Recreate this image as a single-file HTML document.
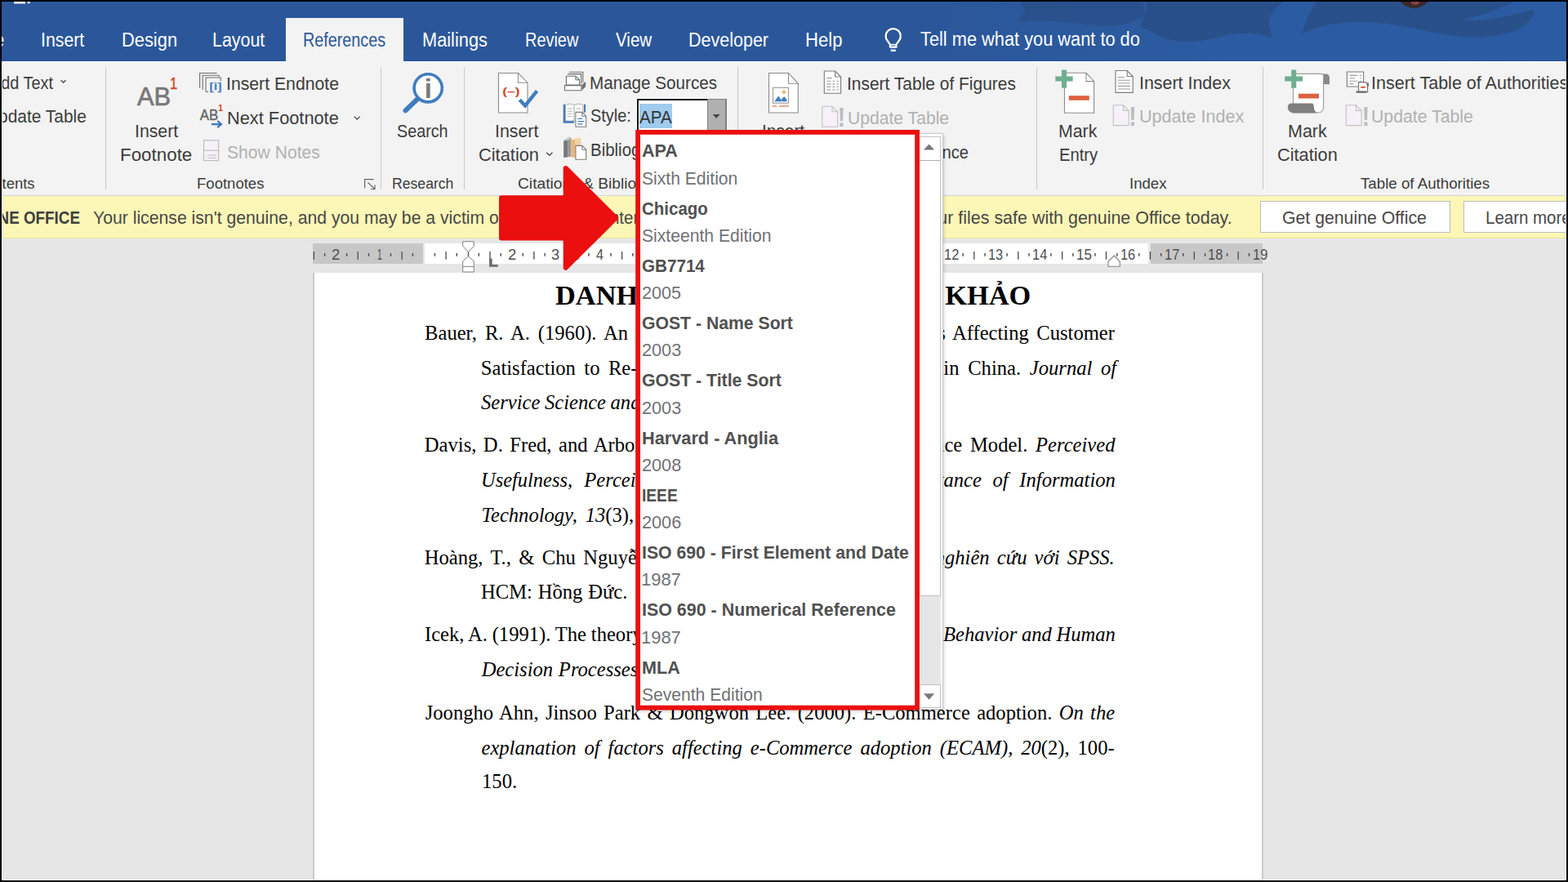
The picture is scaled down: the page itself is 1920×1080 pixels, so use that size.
<!DOCTYPE html>
<html lang="en">
<head>
<meta charset="utf-8">
<title>References - Citation Style</title>
<style>
html,body{margin:0;padding:0;background:#000;}
body{width:1920px;height:1080px;overflow:hidden;position:relative;font-family:"Liberation Sans",sans-serif;color:#3c3c3c;}
#win{position:absolute;left:0;top:0;width:1920px;height:1080px;overflow:hidden;background:#e6e6e6;}
#win span{position:absolute;white-space:pre;transform-origin:0 0;}
#win div,#win svg{position:absolute;}
.hdr{left:0;top:0;width:1920px;height:75px;background:#2b579a;}
.tab{left:350px;top:22px;width:144px;height:56px;background:#f3f3f3;border-left:1.3px solid #fafafa;border-right:1.3px solid #fafafa;box-sizing:border-box;}
.rib{left:0;top:75.4px;width:1920px;height:164px;background:#f3f3f3;}
.ribline{left:0;top:239px;width:1920px;height:1px;background:#d2d2d2;}
.sep{top:82px;width:1px;height:150px;background:#c9c9c9;}
.bar{left:0;top:240px;width:1920px;height:52.3px;background:#fcf7b6;}
.barline{left:0;top:291.1px;width:1920px;height:1.2px;background:#e9e191;}
.barline2{left:0;top:292.3px;width:1920px;height:1.2px;background:#ebebf1;}
.btn{top:246px;height:37px;background:#fff;border:1px solid #bcbcbc;}
.rul{top:298.3px;height:25.2px;}
.page{left:385px;top:334px;width:1160px;height:760px;background:#fff;}
.pageb{top:334px;width:1.5px;height:760px;background:#cbcbcb;}
.dd{left:779px;top:163px;width:375.5px;height:706px;background:#fff;border:1px solid #c9c9c9;box-sizing:border-box;box-shadow:1px 2px 4px rgba(0,0,0,.18);}
.red{left:778.1px;top:159px;width:347.8px;height:710.4px;border:5.8px solid #eb0f0f;box-sizing:border-box;}
i.r{font-style:normal;}
.bk{background:#000;z-index:50;}
</style>
</head>
<body>
<div id="win">
<div class="hdr"></div>
<div style="left:1150px;top:0;width:770px;height:75px;background:linear-gradient(90deg,rgba(43,95,168,0) 0,rgba(43,95,168,.55) 45%,rgba(43,95,168,.6) 100%)"></div>
<svg style="left:1200px;top:0" width="720" height="75" viewBox="1200 0 720 75">
<path d="M1249 2L1255 14L1247 27C1270 23 1300 26 1340 31C1365 33 1390 30 1402 18L1400 2Z" fill="#2a4f88" opacity=".8"/>
<path d="M1404 2C1405 12 1400 24 1396 33C1412 38 1424 50 1448 51C1478 52 1496 42 1520 41C1536 40 1548 44 1558 47C1556 38 1552 30 1556 20C1560 12 1566 6 1572 2Z" fill="#2a4f88" opacity=".9"/>
<path d="M1612 2C1604 14 1598 26 1595 41C1620 30 1646 26 1672 27C1712 28 1744 40 1790 45C1830 48 1862 40 1874 24C1880 16 1880 12 1876 12C1850 18 1820 28 1792 24C1800 22 1830 16 1852 2Z" fill="#2a4f88" opacity=".9"/>
<circle cx="1731.6" cy="-12" r="22" fill="#3a2a27"/>
<ellipse cx="1733" cy="3.6" rx="5" ry="2.4" fill="#8c3d48"/>
</svg>
<div style="left:0;top:74px;width:1920px;height:1px;background:#24509a"></div>

<div class="rib"></div>
<div style="left:2px;top:75.4px;width:1916px;height:1.3px;background:#fff"></div>
<div class="tab"></div>
<div class="ribline"></div>
<div class="sep" style="left:129px"></div>
<div class="sep" style="left:466px"></div>
<div class="sep" style="left:568px"></div>
<div class="sep" style="left:903px"></div>
<div class="sep" style="left:1269px"></div>
<div class="sep" style="left:1546px"></div>
<div class="bar"></div>
<div class="barline"></div>
<div class="barline2"></div>
<div class="btn" style="left:1543px;width:231px"></div>
<div class="btn" style="left:1792px;width:140px"></div>
<div class="rul" style="left:382.5px;width:135.8px;background:#c7c7c7"></div>
<div class="rul" style="left:520.3px;width:886.2px;background:#fff"></div>
<div class="rul" style="left:1409px;width:136.6px;background:#c7c7c7"></div>
<svg style="left:380px;top:290px" width="1180" height="50" viewBox="380 290 1180 50"><path d="M384.4 307.9V317.7M438.2 307.9V317.7M492.2 307.9V317.7M546.1 307.9V317.7M600.0 307.9V317.7M653.9 307.9V317.7M707.8 307.9V317.7M761.6 307.9V317.7M815.5 307.9V317.7M869.5 307.9V317.7M923.4 307.9V317.7M977.2 307.9V317.7M1031.2 307.9V317.7M1085.0 307.9V317.7M1139.0 307.9V317.7M1192.8 307.9V317.7M1246.8 307.9V317.7M1300.7 307.9V317.7M1354.5 307.9V317.7M1408.5 307.9V317.7M1462.3 307.9V317.7M1516.2 307.9V317.7" stroke="#4a4a4a" stroke-width="1.3" fill="none"/><path d="M397.6 310.1V313.8M424.6 310.1V313.8M451.5 310.1V313.8M478.5 310.1V313.8M505.4 310.1V313.8M532.4 310.1V313.8M559.3 310.1V313.8M586.3 310.1V313.8M613.2 310.1V313.8M640.2 310.1V313.8M667.1 310.1V313.8M694.1 310.1V313.8M721.0 310.1V313.8M748.0 310.1V313.8M774.9 310.1V313.8M801.9 310.1V313.8M828.8 310.1V313.8M855.8 310.1V313.8M882.7 310.1V313.8M909.7 310.1V313.8M936.6 310.1V313.8M963.6 310.1V313.8M990.5 310.1V313.8M1017.5 310.1V313.8M1044.4 310.1V313.8M1071.4 310.1V313.8M1098.3 310.1V313.8M1125.3 310.1V313.8M1152.2 310.1V313.8M1179.2 310.1V313.8M1206.1 310.1V313.8M1233.1 310.1V313.8M1260.0 310.1V313.8M1287.0 310.1V313.8M1313.9 310.1V313.8M1340.9 310.1V313.8M1367.8 310.1V313.8M1394.8 310.1V313.8M1421.7 310.1V313.8M1448.7 310.1V313.8M1475.6 310.1V313.8M1502.6 310.1V313.8M1529.5 310.1V313.8" stroke="#4a4a4a" stroke-width="1.4" fill="none"/><path d="M566.7 295.8H580.3V301.3L573.5 308.5L566.7 301.3Z M573.5 313.8L580.3 320.1V333H566.7V320.1Z M566.7 326.3H580.3" fill="#fff" stroke="#808080" stroke-width="1"/><path d="M573.5 308.3V314" stroke="#555" stroke-width="1.4" fill="none"/><path d="M599 316.4H602.7V324H609.7V326.8H599Z" fill="#6e6e6e"/><path d="M1364.2 313L1371.3 320.3V326.2H1356.9V320.3Z" fill="#fff" stroke="#808080" stroke-width="1.1"/></svg>
<div class="page"></div>
<div class="pageb" style="left:383px;width:2px"></div>
<div class="pageb" style="left:1545px"></div>
<svg style="left:0;top:0" width="1920" height="240" viewBox="0 0 1920 240" font-family="'Liberation Sans',sans-serif">
<g fill="none" stroke="#fff" stroke-width="2.3">
<path d="M1090 57.7V54.6L1086.9 50.2A9.1 9.1 0 1 1 1100.5 50.2L1097.4 54.6V57.7Z" stroke-linejoin="round"/>
<path d="M1090 54.7h7.4" stroke-width="1.6"/>
<path d="M1090.7 61.8h6.1" stroke-width="2.5"/>
</g>
<path d="M17 2h14v2.6H17ZM33 2.3h4.4l-2.2 2.6Z" fill="#fff"/>
<g fill="none" stroke="#444" stroke-width="1.3">
<path d="M74.6 98.2l3 3l3-3"/>
<path d="M433.6 142.6l3.6 3.6l3.6-3.6"/>
<path d="M669.2 186.8l3.6 3.6l3.6-3.6"/>
</g>
<g fill="none" stroke="#666" stroke-width="1.2">
<path d="M446.6 230.6V219.6H457.6"/>
<path d="M450.5 223.5l8 7.6M459 226.5v5h-5"/>
</g>
<!-- insert endnote -->
<g fill="none" stroke="#6e6e6e" stroke-width="1.1">
<path d="M244.6 107.5V89.5H265.6"/>
<path d="M248.2 110V92.2H268V94.5"/>
<path d="M252 112.3V95H270.2V99.5"/>
<path d="M252 112.3h3"/>
</g>
<text x="256" y="110.2" font-size="13.6" fill="#3b78bd" stroke="#3b78bd" stroke-width=".25" textLength="15.8" lengthAdjust="spacingAndGlyphs">[i]</text>
<!-- next footnote -->
<text x="244.7" y="147" font-size="18" fill="#666" stroke="#666" stroke-width=".4" textLength="22.5" lengthAdjust="spacingAndGlyphs">AB</text>
<text x="267" y="136.3" font-size="11" font-weight="bold" fill="#d24726">1</text>
<path d="M259 152.1h11M266.3 148l4.6 4.1l-4.6 4.1" fill="none" stroke="#3b78bd" stroke-width="2.3"/>
<!-- show notes -->
<rect x="249.5" y="171.8" width="18.2" height="24.8" fill="#f6f1f8" stroke="#b9b9b9" stroke-width="1.1"/>
<path d="M249.5 184.2h18.2" stroke="#b9b9b9" stroke-width="1.1"/>
<path d="M255 190h10M255 193.2h10M252.4 190h1.3M252.4 193.2h1.3" stroke="#bdbdbd" stroke-width="1.1"/>
<!-- search -->
<path d="M511.5 121l-15 14.4" stroke="#3f7cbf" stroke-width="6" stroke-linecap="round"/>
<circle cx="524.2" cy="107.8" r="17.1" fill="#fff" stroke="#3f7cbf" stroke-width="3.6"/>
<text x="519.7" y="119.5" font-size="33" font-weight="bold" fill="#7a7a7a">i</text>
<!-- insert citation -->
<path d="M610.5 89.5H634.5L646 101.2V138H610.5Z" fill="#fff" stroke="#8c8c8c" stroke-width="1.1"/>
<path d="M634.5 89.5V101.2H646" fill="none" stroke="#8c8c8c" stroke-width="1.1"/>
<text x="615.3" y="115.6" font-size="13" font-weight="bold" fill="#d24726" textLength="21.2" lengthAdjust="spacingAndGlyphs">(–)</text>
<path d="M636.3 122.2l6.8 7.2l14.4-18" fill="none" stroke="#3f7cbf" stroke-width="4.3"/>
<!-- manage sources -->
<g stroke="#6e6e6e" stroke-width="1.1" fill="#fff">
<path d="M697 88.2h16.8v13" fill="none"/>
<path d="M695 90.6h16.6v13" fill="none"/>
<path d="M693.4 104V93.2h11.5l4.6 4.6V104Z"/>
<path d="M704.9 93.2v4.6h4.6" fill="none"/>
<path d="M691.4 104.6h20.6v6.2h-20.6Z"/>
</g>
<path d="M712.5 104.3l4.6-4.6v6.4l-4.6 4.6Z" fill="#6e6e6e"/>
<!-- style -->
<path d="M691 127.8v21.6h12" fill="none" stroke="#3f7cbf" stroke-width="2.6"/>
<path d="M716 127.8v10" fill="none" stroke="#3f7cbf" stroke-width="2"/>
<path d="M692.6 128.4c3.4-1.6 7.2-1.6 10.6.4c3.4-2 7.2-2 10.6-.4v19.6h-21.2Z" fill="#fff" stroke="#a0a0a0" stroke-width=".9"/>
<path d="M703 129.6v18" stroke="#a0a0a0" stroke-width="1"/>
<path d="M694.6 133h6.2M694.6 136.2h6.2M694.6 139.4h6.2M694.6 142.6h6.2M705.4 133h6.2" stroke="#b0b0b0" stroke-width="1"/>
<path d="M704.9 137.4h8l4.8 4.8v13h-12.8Z" fill="#fff" stroke="#7a7a7a" stroke-width="1.1"/>
<path d="M712.9 137.4v4.8h4.8" fill="none" stroke="#7a7a7a" stroke-width="1.1"/>
<path d="M707.4 145.4h6M707.4 148.6h8M707.4 151.8h6" stroke="#3f7cbf" stroke-width="1.3"/>
<!-- bibliography -->
<path d="M690.3 172.4l6.8-4.4l2.4 1.2v22.6l-9.2 1Z" fill="#9a9a9a"/>
<path d="M690.3 172.4v20.4l4.4-.6v-20.6Z" fill="#777"/>
<path d="M690.3 172.4l6.8-4.4l2.4 1.2l-4.8 2.6Z" fill="#e6e6e6" stroke="#9a9a9a" stroke-width=".6"/>
<path d="M699.5 171.4l8.4-4l3.4 1.6v23.6h-11.8Z" fill="#f2d2a6"/>
<path d="M699.5 171.4v21.2h4.6v-22Z" fill="#e8b678"/>
<path d="M699.5 171.4l8.4-4l3.4 1.6l-7.2 1.6Z" fill="#fbe9cf"/>
<path d="M704.9 178.4h8l4.8 4.8v12h-12.8Z" fill="#fff" stroke="#7a7a7a" stroke-width="1.1"/>
<path d="M712.9 178.4v4.8h4.8" fill="none" stroke="#7a7a7a" stroke-width="1.1"/>
<!-- insert caption -->
<path d="M941.5 89.5H965.5L977.3 102.3V138H941.5Z" fill="#fff" stroke="#8c8c8c" stroke-width="1.1"/>
<path d="M965.5 89.5V102.3H977.3" fill="none" stroke="#8c8c8c" stroke-width="1.1"/>
<rect x="946.5" y="107.4" width="19" height="18.8" fill="#fff" stroke="#9a9a9a" stroke-width="1.1"/>
<circle cx="959.9" cy="112.8" r="2.3" fill="#eabc6c"/>
<path d="M948.2 124.3l5-6.8l4.6 6.8Z M956.6 122l3.6-4l3.4 4.6v1.7h-5.6Z" fill="#3f7cbf"/>
<path d="M945.6 130h5.6M954 130h12" stroke="#e58a72" stroke-width="1.6"/>
<!-- table of figures -->
<path d="M1009.3 87H1022.6L1029.6 94V114.3H1009.3Z" fill="#fff" stroke="#7a7a7a" stroke-width="1.1"/>
<path d="M1022.6 87V94H1029.6" fill="none" stroke="#7a7a7a" stroke-width="1.1"/>
<path d="M1012.4 95.6h6.4M1012.4 99.3h5M1019.4 99.3h3M1024.4 99.3h2.4M1012.4 102.9h5M1019.4 102.9h3M1024.4 102.9h2.4M1012.4 106.4h5M1019.4 106.4h3M1024.4 106.4h2.4M1012.4 109.9h5M1019.4 109.9h3M1024.4 109.9h2.4" stroke="#a0a0a0" stroke-width="1.1"/>
<!-- update table (disabled) -->
<g id="upd">
<path d="M1006.8 130.2H1019L1025.6 136.8V155.2H1006.8Z" fill="#f6f1f8" stroke="#c2c2c2" stroke-width="1.1"/>
<path d="M1019 130.2V136.8H1025.6" fill="none" stroke="#c2c2c2" stroke-width="1.1"/>
<text x="1024.7" y="155.0" font-size="34" font-weight="bold" fill="#bcbcbc" transform="translate(1030.3 0) scale(.82 1) translate(-1030.3 0)">!</text>
</g>
<!-- mark entry -->
<path d="M1303.5 89.3H1330L1339.6 99.6V138.3H1303.5Z" fill="#fff" stroke="#8c8c8c" stroke-width="1.1"/>
<path d="M1330 89.3V99.6H1339.6" fill="none" stroke="#8c8c8c" stroke-width="1.1"/>
<path d="M1292.3 96.6h21.4M1303 85.4v22.4" stroke="#6fae90" stroke-width="6" fill="none"/>
<path d="M1308.8 120h25" stroke="#dc6141" stroke-width="5.6"/>
<!-- insert index -->
<path d="M1366 86.5H1380.2L1387.2 93.5V113.4H1366Z" fill="#fff" stroke="#7a7a7a" stroke-width="1.1"/>
<path d="M1380.2 86.5V93.5H1387.2" fill="none" stroke="#7a7a7a" stroke-width="1.1"/>
<path d="M1369 94.6h8M1369 98.2h15M1369 101.8h15M1369 105.4h15M1369 109h15" stroke="#a0a0a0" stroke-width="1.1"/>
<!-- update index (disabled) -->
<path d="M1363.3 128.8H1375.5L1382.1 135.4V153.6H1363.3Z" fill="#f6f1f8" stroke="#c2c2c2" stroke-width="1.1"/>
<path d="M1375.5 128.8V135.4H1382.1" fill="none" stroke="#c2c2c2" stroke-width="1.1"/>
<text x="1381.2" y="153.6" font-size="34" font-weight="bold" fill="#bcbcbc" transform="translate(1386.8 0) scale(.82 1) translate(-1386.8 0)">!</text>
<!-- mark citation -->
<path d="M1620 90.4h3.6a4.4 4.4 0 0 1 4.4 4.4v8.4h-8Z" fill="#8a8a8a"/>
<path d="M1583.5 90.4H1618a2.6 2.6 0 0 1 2.6 2.6V131.8a6.2 6.2 0 0 1-6.2 6.2H1583.5Z" fill="#fff" stroke="#9a9a9a" stroke-width="1.1"/>
<path d="M1576.8 131a4.6 4.6 0 0 1 4.6-4.6h24.6c2.4 0 3 2.6 3 5.4c0 3.4 1.6 5.8 4.6 6.4h-30.2a6.6 6.6 0 0 1-6.6-6.6Z" fill="#7f7f7f"/>
<path d="M1573.2 96.6h22M1584.2 85.4v22.4" stroke="#6fae90" stroke-width="6" fill="none"/>
<path d="M1590 117.6h25" stroke="#dc6141" stroke-width="5.8"/>
<!-- insert table of authorities -->
<path d="M1649.4 88H1669.6V106H1649.4Z" fill="#fff" stroke="#7a7a7a" stroke-width="1.1"/>
<path d="M1652.4 92.4h10M1652.4 95.8h7M1652.4 99.2h10M1652.4 102.6h5M1665 92.4h2M1665 95.8h2M1665 99.2h2" stroke="#a0a0a0" stroke-width="1.1"/>
<path d="M1663.6 100.6h7.4a3.6 3.6 0 0 1 3.6 3.6v8.6h-11Z" fill="#fff" stroke="#6e6e6e" stroke-width="1.1"/>
<path d="M1660.6 111.4h12.6v2.4h-12.6Z" fill="#6e6e6e"/>
<path d="M1673.6 101.6h2.4v4h-2.4Z" fill="#6e6e6e"/>
<path d="M1666.2 106.8h5.6" stroke="#dc4a2c" stroke-width="1.8"/>
<!-- update table ToA (disabled) -->
<path d="M1648.3 128.8H1660.5L1667.1 135.4V153.6H1648.3Z" fill="#f6f1f8" stroke="#c2c2c2" stroke-width="1.1"/>
<path d="M1660.5 128.8V135.4H1667.1" fill="none" stroke="#c2c2c2" stroke-width="1.1"/>
<text x="1666.7" y="153.6" font-size="34" font-weight="bold" fill="#bcbcbc" transform="translate(1672.3 0) scale(.82 1) translate(-1672.3 0)">!</text>
</svg>

<div style="left:779.5px;top:121px;width:110px;height:40px;background:#fff;border-left:2px solid #1a1a1a;border-top:2px solid #1a1a1a;box-sizing:border-box"></div>
<div style="left:866px;top:121px;width:23.5px;height:40px;background:#b0b0b0;border:1px solid #808080;border-right-width:2px;box-sizing:border-box"></div>
<div style="left:783px;top:127px;width:40px;height:29.7px;background:#9ecbee"></div>
<svg style="left:872px;top:139px" width="11" height="7" viewBox="0 0 11 7"><path d="M0.7 0.9H9.6L5.15 6Z" fill="#444"/></svg>

<span style="left:-50.12px;top:38px;font-size:23px;line-height:23px;color:#ffffff;transform:scaleX(0.9000);">Home</span>
<span style="left:50.19px;top:38px;font-size:23px;line-height:23px;color:#ffffff;transform:scaleX(0.9252);">Insert</span>
<span style="left:149.16px;top:38px;font-size:23px;line-height:23px;color:#ffffff;transform:scaleX(0.9503);">Design</span>
<span style="left:260.26px;top:38px;font-size:23px;line-height:23px;color:#ffffff;transform:scaleX(0.9309);">Layout</span>
<span style="left:370.74px;top:38px;font-size:23px;line-height:23px;color:#2b579a;transform:scaleX(0.8600);">References</span>
<span style="left:516.96px;top:38px;font-size:23px;line-height:23px;color:#ffffff;transform:scaleX(0.9468);">Mailings</span>
<span style="left:642.51px;top:38px;font-size:23px;line-height:23px;color:#ffffff;transform:scaleX(0.8662);">Review</span>
<span style="left:753.80px;top:38px;font-size:23px;line-height:23px;color:#ffffff;transform:scaleX(0.8936);">View</span>
<span style="left:843.18px;top:38px;font-size:23px;line-height:23px;color:#ffffff;transform:scaleX(0.9350);">Developer</span>
<span style="left:986.09px;top:38px;font-size:23px;line-height:23px;color:#ffffff;transform:scaleX(0.9605);">Help</span>
<span style="left:1127.37px;top:37px;font-size:23px;line-height:23px;color:#ffffff;transform:scaleX(0.9472);">Tell me what you want to do</span>
<span style="left:-12.06px;top:91px;font-size:22px;line-height:22px;transform:scaleX(0.9046);">Add Text</span>
<span style="left:-17.31px;top:132px;font-size:22px;line-height:22px;transform:scaleX(0.9505);">Update Table</span>
<span style="left:-100.78px;top:216px;font-size:18px;line-height:18px;transform:scaleX(1.0246);">Table of Contents</span>
<span style="left:168.00px;top:102px;font-size:32px;line-height:32px;color:#787878;transform:scaleX(0.9642);-webkit-text-stroke:0.7px #787878;">AB</span>
<span style="left:207.55px;top:92px;font-size:20.5px;line-height:20.5px;color:#d24726;transform:scaleX(0.8070);-webkit-text-stroke:0.5px #d24726;">1</span>
<span style="left:164.60px;top:150px;font-size:22px;line-height:22px;transform:scaleX(0.9651);">Insert</span>
<span style="left:147.02px;top:179px;font-size:22px;line-height:22px;transform:scaleX(1.0170);">Footnote</span>
<span style="left:277.23px;top:92px;font-size:22px;line-height:22px;transform:scaleX(0.9644);">Insert Endnote</span>
<span style="left:277.76px;top:134px;font-size:22px;line-height:22px;transform:scaleX(0.9898);">Next Footnote</span>
<span style="left:277.83px;top:176px;font-size:22px;line-height:22px;color:#b1b1b1;transform:scaleX(0.9593);">Show Notes</span>
<span style="left:241.14px;top:216px;font-size:18px;line-height:18px;transform:scaleX(1.0295);">Footnotes</span>
<span style="left:486.44px;top:150px;font-size:22px;line-height:22px;transform:scaleX(0.8978);">Search</span>
<span style="left:480.04px;top:216px;font-size:18px;line-height:18px;transform:scaleX(0.9789);">Research</span>
<span style="left:606.18px;top:150px;font-size:22px;line-height:22px;transform:scaleX(0.9703);">Insert</span>
<span style="left:586.33px;top:179px;font-size:22px;line-height:22px;transform:scaleX(0.9921);">Citation</span>
<span style="left:722.43px;top:91px;font-size:22px;line-height:22px;transform:scaleX(0.9379);">Manage Sources</span>
<span style="left:722.93px;top:131px;font-size:22px;line-height:22px;transform:scaleX(0.9052);">Style:</span>
<span style="left:722.93px;top:173px;font-size:22px;line-height:22px;transform:scaleX(0.9300);">Bibliography</span>
<span style="left:634.47px;top:216px;font-size:18px;line-height:18px;transform:scaleX(1.0664);">Citations &amp; Bibliography</span>
<span style="left:932.75px;top:150px;font-size:22px;line-height:22px;transform:scaleX(0.9471);">Insert</span>
<span style="left:924.45px;top:179px;font-size:22px;line-height:22px;transform:scaleX(0.9200);">Caption</span>
<span style="left:1037.15px;top:92px;font-size:22px;line-height:22px;transform:scaleX(0.9524);">Insert Table of Figures</span>
<span style="left:1038.11px;top:134px;font-size:22px;line-height:22px;color:#b1b1b1;transform:scaleX(0.9602);">Update Table</span>
<span style="left:1040.92px;top:176px;font-size:22px;line-height:22px;transform:scaleX(0.9200);">Cross-reference</span>
<span style="left:1050.84px;top:216px;font-size:18px;line-height:18px;transform:scaleX(0.9500);">Captions</span>
<span style="left:1296.22px;top:150px;font-size:22px;line-height:22px;transform:scaleX(0.9690);">Mark</span>
<span style="left:1296.58px;top:179px;font-size:22px;line-height:22px;transform:scaleX(0.9166);">Entry</span>
<span style="left:1394.60px;top:91px;font-size:22px;line-height:22px;transform:scaleX(0.9733);">Insert Index</span>
<span style="left:1394.59px;top:132px;font-size:22px;line-height:22px;color:#b1b1b1;transform:scaleX(0.9796);">Update Index</span>
<span style="left:1383.43px;top:216px;font-size:18px;line-height:18px;transform:scaleX(1.0335);">Index</span>
<span style="left:1576.97px;top:150px;font-size:22px;line-height:22px;transform:scaleX(0.9772);">Mark</span>
<span style="left:1564.33px;top:179px;font-size:22px;line-height:22px;transform:scaleX(0.9897);">Citation</span>
<span style="left:1678.57px;top:91px;font-size:22px;line-height:22px;transform:scaleX(0.9782);">Insert Table of Authorities</span>
<span style="left:1678.69px;top:132px;font-size:22px;line-height:22px;color:#b1b1b1;transform:scaleX(0.9664);">Update Table</span>
<span style="left:1666.00px;top:216px;font-size:18px;line-height:18px;transform:scaleX(1.0397);">Table of Authorities</span>
<span style="left:783.00px;top:133px;font-size:22px;line-height:22px;color:#333;transform:scaleX(0.9361);">APA</span>
<span style="left:-105.60px;top:256px;font-size:22px;line-height:22px;color:#404040;font-weight:bold;transform:scaleX(0.8558);">GET GENUINE OFFICE</span>
<span style="left:114.29px;top:256px;font-size:22px;line-height:22px;color:#484848;transform:scaleX(0.9632);">Your license isn't genuine, and you may be a victim of software</span>
<span style="left:713.76px;top:256px;font-size:22px;line-height:22px;color:#484848;transform:scaleX(0.9300);">counterfeiting.</span>
<span style="left:858.87px;top:256px;font-size:22px;line-height:22px;color:#484848;transform:scaleX(0.9747);">Avoid interruption and keep your files safe with genuine Office today.</span>
<span style="left:1569.93px;top:256px;font-size:22px;line-height:22px;color:#484848;transform:scaleX(0.9661);">Get genuine Office</span>
<span style="left:1818.53px;top:256px;font-size:22px;line-height:22px;color:#484848;transform:scaleX(0.9300);">Learn more</span>
<span style="left:679.86px;top:345px;font-size:34px;line-height:34px;color:#000;font-family:'Liberation Serif',serif;font-weight:bold;transform:scaleX(1.0112);">DANH MỤC TÀI LIỆU THAM KHẢO</span>
<span style="left:520.08px;top:396px;font-size:24.6px;line-height:24.6px;color:#000;font-family:'Liberation Serif',serif;word-spacing:3.763px;">Bauer, R. A. (1960). An Empirical Study on</span>
<span style="left:1085.39px;top:396px;font-size:24.6px;line-height:24.6px;color:#000;font-family:'Liberation Serif',serif;word-spacing:3.389px;">Factors Affecting Customer</span>
<span style="left:588.80px;top:439px;font-size:24.6px;line-height:24.6px;color:#000;font-family:'Liberation Serif',serif;word-spacing:4.316px;">Satisfaction to Re-purchase Intention</span>
<span style="left:1005.50px;top:439px;font-size:24.6px;line-height:24.6px;color:#000;font-family:'Liberation Serif',serif;word-spacing:4.562px;">Online Stores in China. <i>Journal of</i></span>
<span style="left:589.04px;top:481px;font-size:24.6px;line-height:24.6px;color:#000;font-family:'Liberation Serif',serif;font-style:italic;word-spacing:-0.616px;">Service Science and Management.</span>
<span style="left:519.84px;top:533px;font-size:24.6px;line-height:24.6px;color:#000;font-family:'Liberation Serif',serif;word-spacing:2.365px;">Davis, D. Fred, and Arbor, Ann. (1989).</span>
<span style="left:1063.58px;top:533px;font-size:24.6px;line-height:24.6px;color:#000;font-family:'Liberation Serif',serif;word-spacing:3.572px;">Acceptance Model. <i>Perceived</i></span>
<span style="left:589.06px;top:576px;font-size:24.6px;line-height:24.6px;color:#000;font-family:'Liberation Serif',serif;font-style:italic;transform:scaleX(0.9942);">Usefulness,</span>
<span style="left:715.33px;top:576px;font-size:24.6px;line-height:24.6px;color:#000;font-family:'Liberation Serif',serif;font-style:italic;word-spacing:9.000px;">Perceived Ease of Use,</span>
<span style="left:1088.61px;top:576px;font-size:24.6px;line-height:24.6px;color:#000;font-family:'Liberation Serif',serif;font-style:italic;word-spacing:7.489px;">Acceptance of Information</span>
<span style="left:589.55px;top:619px;font-size:24.6px;line-height:24.6px;color:#000;font-family:'Liberation Serif',serif;font-style:italic;word-spacing:3.739px;">Technology, 13<i class="r">(3),</i> 319-340.</span>
<span style="left:519.74px;top:671px;font-size:24.6px;line-height:24.6px;color:#000;font-family:'Liberation Serif',serif;word-spacing:3.265px;">Hoàng, T., &amp; Chu Nguyễn Mộng Ngọc. (2008).</span>
<span style="left:1144.72px;top:671px;font-size:24.6px;line-height:24.6px;color:#000;font-family:'Liberation Serif',serif;font-style:italic;word-spacing:3.014px;">nghiên cứu với SPSS.</span>
<span style="left:589.08px;top:713px;font-size:24.6px;line-height:24.6px;color:#000;font-family:'Liberation Serif',serif;word-spacing:0.643px;">HCM: Hồng Đức.</span>
<span style="left:520.01px;top:765px;font-size:24.6px;line-height:24.6px;color:#000;font-family:'Liberation Serif',serif;word-spacing:-0.330px;">Icek, A. (1991). The theory of planned behavior.</span>
<span style="left:1000.03px;top:765px;font-size:24.6px;line-height:24.6px;color:#000;font-family:'Liberation Serif',serif;font-style:italic;word-spacing:-0.476px;">Organizational Behavior and Human</span>
<span style="left:589.70px;top:808px;font-size:24.6px;line-height:24.6px;color:#000;font-family:'Liberation Serif',serif;font-style:italic;word-spacing:0.600px;">Decision Processes, 50(2), 179-211.</span>
<span style="left:520.73px;top:861px;font-size:24.6px;line-height:24.6px;color:#000;font-family:'Liberation Serif',serif;word-spacing:2.187px;">Joongho Ahn, Jinsoo Park &amp; Dongwon Lee. (2000). E-Commerce adoption. <i>On the</i></span>
<span style="left:589.48px;top:904px;font-size:24.6px;line-height:24.6px;color:#000;font-family:'Liberation Serif',serif;font-style:italic;word-spacing:3.776px;">explanation of factors affecting e-Commerce adoption (ECAM), 20<i class="r">(2), 100-</i></span>
<span style="left:589.68px;top:945px;font-size:24.6px;line-height:24.6px;color:#000;font-family:'Liberation Serif',serif;transform:scaleX(1.0040);">150.</span>
<span style="left:406.15px;top:303px;font-size:18px;line-height:18px;color:#4f4f4f;transform:scaleX(1.0285);">2</span>
<span style="left:461.65px;top:303px;font-size:18px;line-height:18px;color:#4f4f4f;transform:scaleX(0.5759);">1</span>
<span style="left:621.79px;top:303px;font-size:18px;line-height:18px;color:#4f4f4f;transform:scaleX(1.0276);">2</span>
<span style="left:675.32px;top:303px;font-size:18px;line-height:18px;color:#4f4f4f;transform:scaleX(1.0162);">3</span>
<span style="left:729.80px;top:303px;font-size:18px;line-height:18px;color:#4f4f4f;transform:scaleX(0.8910);">4</span>
<span style="left:1155.95px;top:303px;font-size:18px;line-height:18px;color:#4f4f4f;transform:scaleX(0.9179);">12</span>
<span style="left:1210.37px;top:303px;font-size:18px;line-height:18px;color:#4f4f4f;transform:scaleX(0.9096);">13</span>
<span style="left:1263.78px;top:303px;font-size:18px;line-height:18px;color:#4f4f4f;transform:scaleX(0.9127);">14</span>
<span style="left:1318.17px;top:303px;font-size:18px;line-height:18px;color:#4f4f4f;transform:scaleX(0.9381);">15</span>
<span style="left:1371.57px;top:303px;font-size:18px;line-height:18px;color:#4f4f4f;transform:scaleX(0.9099);">16</span>
<span style="left:1425.96px;top:303px;font-size:18px;line-height:18px;color:#4f4f4f;transform:scaleX(0.9178);">17</span>
<span style="left:1479.37px;top:303px;font-size:18px;line-height:18px;color:#4f4f4f;transform:scaleX(0.9118);">18</span>
<span style="left:1533.76px;top:303px;font-size:18px;line-height:18px;color:#4f4f4f;transform:scaleX(0.9158);">19</span>
<svg style="left:600px;top:195px" width="170" height="145" viewBox="600 195 170 145"><path d="M614 242.3H692.7V206L754.1 266.9L692.7 327.9V291.4H614Z" fill="#eb0f0f" stroke="#eb0f0f" stroke-width="6" stroke-linejoin="round"/></svg>

<div class="dd">
<div style="left:345px;top:3px;width:27.3px;height:30.4px;background:#fff;border:1px solid #c4c4c4;border-bottom:1.4px solid #b0b0b0;box-sizing:border-box"></div>
<div style="left:345px;top:33px;width:27.3px;height:532.5px;background:#fff;border:1px solid #c0c0c0;border-top:none;box-sizing:border-box"></div>
<div style="left:347px;top:565.5px;width:25.3px;height:109px;background:#e6e6e6"></div>
<div style="left:345px;top:674px;width:27.3px;height:29px;background:#fff;border:1px solid #c0c0c0;box-sizing:border-box"></div>
<svg style="left:351px;top:12.2px" width="14" height="8" viewBox="0 0 14 8"><path d="M0 7.5H13.2L6.6 0.4Z" fill="#777"/></svg>
<svg style="left:351px;top:685px" width="14" height="8" viewBox="0 0 14 8"><path d="M0 0.3H13.2L6.6 7.7Z" fill="#777"/></svg>

</div>
<span style="left:786.21px;top:175px;font-size:21.3px;line-height:21.3px;color:#505050;font-weight:bold;transform:scaleX(1.0117);">APA</span>
<span style="left:785.93px;top:208px;font-size:22px;line-height:22px;color:#6f7176;transform:scaleX(0.9595);">Sixth Edition</span>
<span style="left:785.72px;top:246px;font-size:21.3px;line-height:21.3px;color:#505050;font-weight:bold;transform:scaleX(0.9617);">Chicago</span>
<span style="left:785.93px;top:278px;font-size:22px;line-height:22px;color:#6f7176;transform:scaleX(0.9604);">Sixteenth Edition</span>
<span style="left:785.66px;top:316px;font-size:21.3px;line-height:21.3px;color:#505050;font-weight:bold;transform:scaleX(0.9685);">GB7714</span>
<span style="left:786.00px;top:348px;font-size:22px;line-height:22px;color:#6f7176;transform:scaleX(0.9825);">2005</span>
<span style="left:785.64px;top:386px;font-size:21.3px;line-height:21.3px;color:#505050;font-weight:bold;transform:scaleX(0.9952);">GOST - Name Sort</span>
<span style="left:785.98px;top:418px;font-size:22px;line-height:22px;color:#6f7176;transform:scaleX(0.9854);">2003</span>
<span style="left:785.82px;top:456px;font-size:21.3px;line-height:21.3px;color:#505050;font-weight:bold;transform:scaleX(0.9979);">GOST - Title Sort</span>
<span style="left:785.98px;top:489px;font-size:22px;line-height:22px;color:#6f7176;transform:scaleX(0.9854);">2003</span>
<span style="left:785.84px;top:527px;font-size:21.3px;line-height:21.3px;color:#505050;font-weight:bold;transform:scaleX(1.0199);">Harvard - Anglia</span>
<span style="left:786.00px;top:559px;font-size:22px;line-height:22px;color:#6f7176;transform:scaleX(0.9848);">2008</span>
<span style="left:785.96px;top:597px;font-size:21.3px;line-height:21.3px;color:#505050;font-weight:bold;transform:scaleX(0.8996);">IEEE</span>
<span style="left:785.98px;top:629px;font-size:22px;line-height:22px;color:#6f7176;transform:scaleX(0.9855);">2006</span>
<span style="left:785.84px;top:667px;font-size:21.3px;line-height:21.3px;color:#505050;font-weight:bold;transform:scaleX(0.9968);">ISO 690 - First Element and Date</span>
<span style="left:784.76px;top:699px;font-size:22px;line-height:22px;color:#6f7176;transform:scaleX(0.9976);">1987</span>
<span style="left:785.84px;top:737px;font-size:21.3px;line-height:21.3px;color:#505050;font-weight:bold;transform:scaleX(1.0062);">ISO 690 - Numerical Reference</span>
<span style="left:784.76px;top:770px;font-size:22px;line-height:22px;color:#6f7176;transform:scaleX(0.9976);">1987</span>
<span style="left:785.84px;top:808px;font-size:21.3px;line-height:21.3px;color:#505050;font-weight:bold;transform:scaleX(1.0133);">MLA</span>
<span style="left:785.93px;top:840px;font-size:22px;line-height:22px;color:#6f7176;transform:scaleX(0.9579);">Seventh Edition</span>
<svg style="left:770px;top:150px" width="370" height="730" viewBox="770 150 370 730"><rect x="781.1" y="161.9" width="342" height="704.7" fill="none" stroke="#eb0f0f" stroke-width="5.8"/></svg>
<div style="left:2px;top:76px;width:1px;height:1002px;background:rgba(255,255,255,.85);z-index:49"></div>
<div style="left:1917px;top:76px;width:1px;height:1002px;background:rgba(255,255,255,.85);z-index:49"></div>
<div style="left:2px;top:1077px;width:1916px;height:1px;background:rgba(255,255,255,.9);z-index:49"></div>
<div class="bk" style="left:0;top:0;width:1920px;height:2px"></div>
<div class="bk" style="left:0;top:1078px;width:1920px;height:2px"></div>
<div class="bk" style="left:0;top:0;width:2px;height:1080px"></div>
<div class="bk" style="left:1918px;top:0;width:2px;height:1080px"></div>
</div>
</body>
</html>
